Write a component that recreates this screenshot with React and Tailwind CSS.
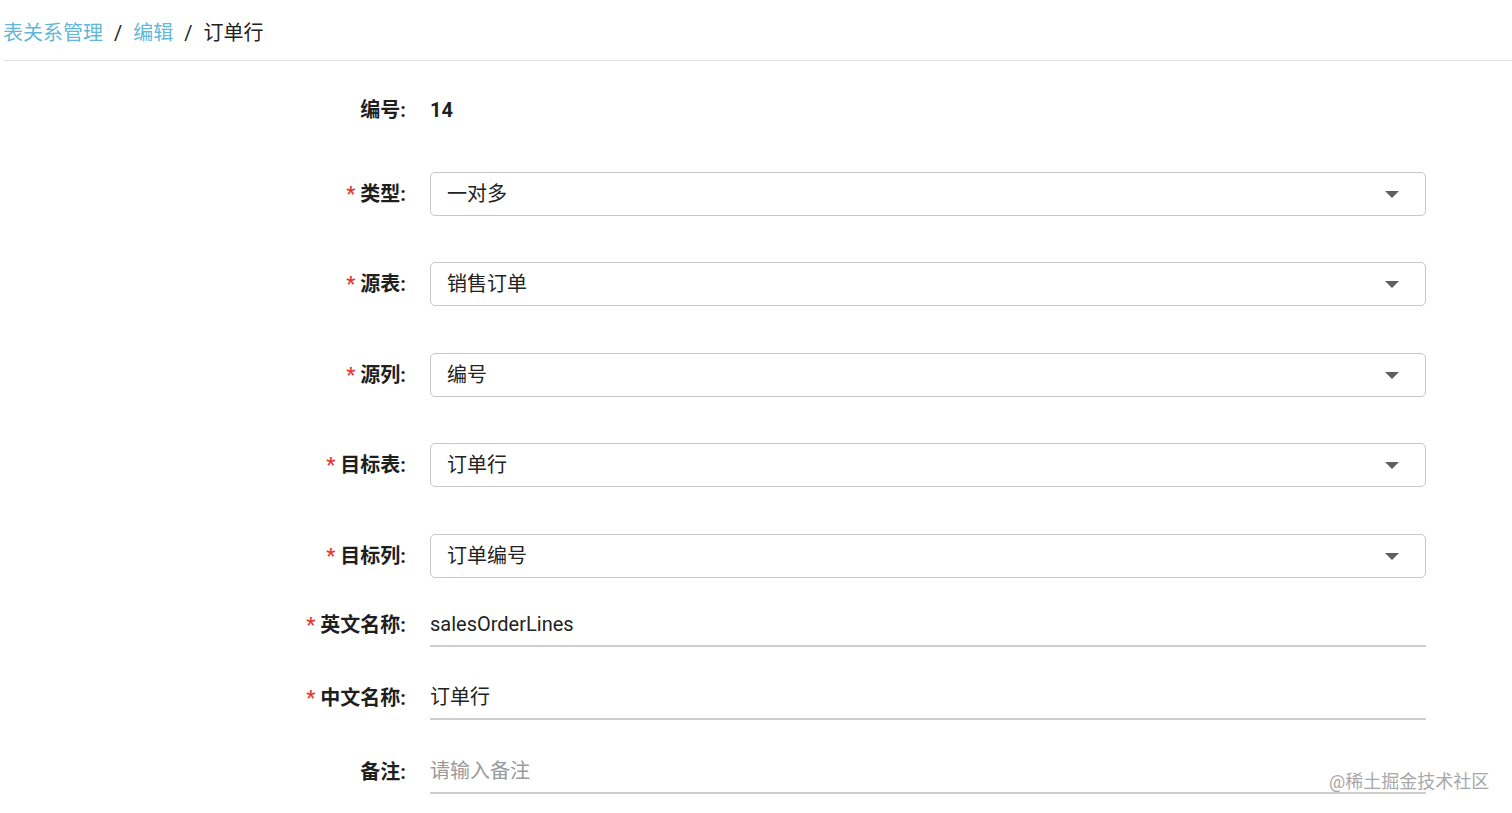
import React from "react";

const font = {
  fontFamily: '"Roboto", "Noto Sans CJK SC", sans-serif',
};

// Triangle used by every select
const Caret = () => (
  <svg width="14" height="7" viewBox="0 0 14 7" className="block">
    <path d="M0 0 L14 0 L7 7 Z" fill="#5f5f5f" />
  </svg>
);

const Label = ({ text, required }) => (
  <div className="w-[406px] shrink-0 flex justify-end items-center text-[20px] font-bold text-[#1f1f1f]">
    {required && <span className="text-[#e53935] mr-[5px] font-bold">*</span>}
    <span>{text}:</span>
  </div>
);

const SelectRow = ({ label, value, className }) => (
  <div className={"flex items-center h-[44px] " + className}>
    <Label text={label} required />
    <div className="ml-[24px] w-[996px] h-[44px] border border-[#c6c6c6] rounded-[5px] flex items-center justify-between pl-[16px] pr-[26px] text-[20px] text-[#222]">
      <span>{value}</span>
      <Caret />
    </div>
  </div>
);

const TextRow = ({ label, value, placeholder, required, className }) => (
  <div className={"flex items-center h-[44px] " + className}>
    <Label text={label} required={required} />
    <div className="ml-[24px] w-[996px] h-[44px] border-b-2 border-[#cfcfcf] flex items-center text-[20px]">
      {value ? (
        <span className="text-[#222]">{value}</span>
      ) : (
        <span className="text-[#9a9a9a]">{placeholder}</span>
      )}
    </div>
  </div>
);

export default function App() {
  return (
    <div className="relative w-[1512px] h-[813px] bg-white overflow-hidden" style={font}>
      <div className="ml-[3px] h-[61px] border-b border-[#e2e2e2] flex items-center pt-[5px] text-[20px]">
        <span className="text-[#63b7d7]">表关系管理</span>
        <span className="mx-[11px] text-[#222]">/</span>
        <span className="text-[#63b7d7]">编辑</span>
        <span className="mx-[11px] text-[#222]">/</span>
        <span className="text-[#222]">订单行</span>
      </div>

      <div className="flex items-center h-[40px] mt-[29px]">
        <Label text="编号" />
        <span className="ml-[24px] text-[20px] font-bold text-[#1f1f1f]">14</span>
      </div>

      <SelectRow label="类型" value="一对多" className="mt-[42px]" />
      <SelectRow label="源表" value="销售订单" className="mt-[46px]" />
      <SelectRow label="源列" value="编号" className="mt-[47px]" />
      <SelectRow label="目标表" value="订单行" className="mt-[46px]" />
      <SelectRow label="目标列" value="订单编号" className="mt-[47px]" />

      <TextRow label="英文名称" value="salesOrderLines" required className="mt-[25px]" />
      <TextRow label="中文名称" value="订单行" required className="mt-[29px]" />
      <TextRow label="备注" placeholder="请输入备注" className="mt-[30px]" />

      <div className="absolute left-[1329px] top-[768px] text-[18px] text-[#9e9e9e] opacity-90">
        @稀土掘金技术社区
      </div>
    </div>
  );
}
